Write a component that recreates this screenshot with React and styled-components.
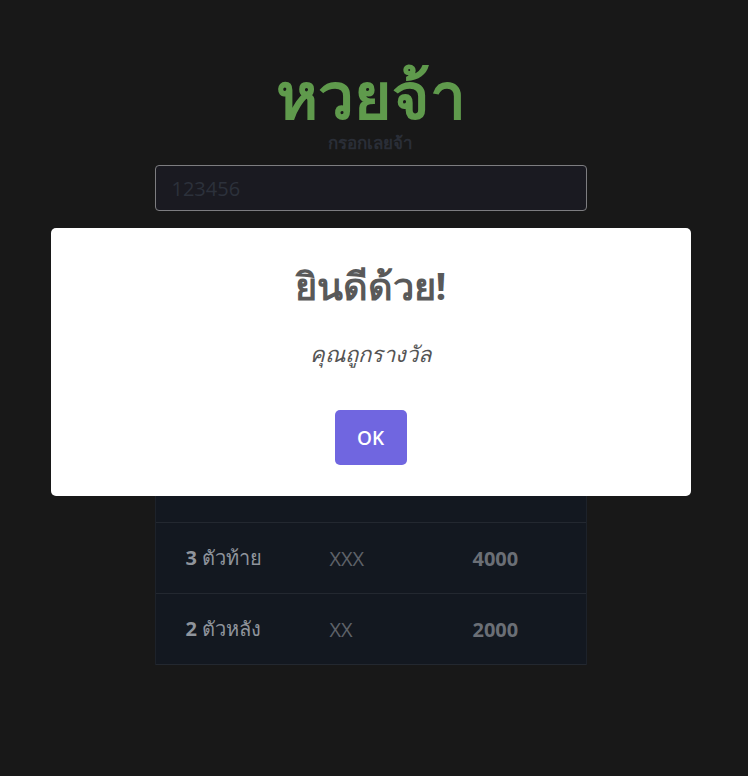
import React from 'react';
import styled, { createGlobalStyle } from 'styled-components';

const GlobalStyle = createGlobalStyle`
	html, body {
		margin: 0;
		padding: 0;
		background: #181818;
		font-family: 'Open Sans', 'Noto Sans', sans-serif;
	}
`;

const prizes = [
	{ label: 'รางวัลที่', num: '1', number: 'XXXXXX', money: '6000000' },
	{ label: 'ข้างเคียง', num: '', number: 'XXXXXX', money: '100000' },
	{ label: 'ตัวหน้า', num: '3', number: 'XXX', money: '4000' },
	{ label: 'ตัวท้าย', num: '3', number: 'XXX', money: '4000' },
	{ label: 'ตัวหลัง', num: '2', number: 'XX', money: '2000' },
];

const App = () => {
	return (
		<>
			<GlobalStyle />
			<Page>
				<Title>หวยจ้า</Title>
				<Subtitle>กรอกเลยจ้า</Subtitle>
				<NumberInput type='text' placeholder='123456' autoComplete='off' />
				<Table>
					<HeadRow>
						<Cell>รางวัล</Cell>
						<Cell>เลข</Cell>
						<Cell>เงิน</Cell>
					</HeadRow>
					{prizes.map((p, id) => (
						<Row key={id}>
							<Cell>
								{p.num && <b>{p.num} </b>}
								{p.label}
							</Cell>
							<Cell muted>{p.number}</Cell>
							<Cell money>{p.money}</Cell>
						</Row>
					))}
				</Table>
			</Page>
			<Overlay>
				<Popup>
					<PopupTitle>ยินดีด้วย!</PopupTitle>
					<PopupText>คุณถูกรางวัล</PopupText>
					<OkButton>OK</OkButton>
				</Popup>
			</Overlay>
		</>
	);
};

export default App;

// the reference is centred in 741px, the last 7px being a (hidden) scrollbar gutter
const Page = styled.div`
	display: flex;
	flex-direction: column;
	align-items: center;
	padding-top: 61px;
	padding-right: 7px;
	padding-bottom: 80px;
`;

const Title = styled.h1`
	margin: 0;
	font-size: 64px;
	line-height: 68px;
	font-weight: 700;
	color: #5f9a4c;
`;

const Subtitle = styled.div`
	margin-top: 3px;
	font-size: 17px;
	line-height: 22px;
	font-weight: 700;
	color: #2a2e37;
`;

const NumberInput = styled.input`
	box-sizing: border-box;
	margin-top: 11px;
	width: 432px;
	height: 46px;
	padding: 0 16px;
	border: 1px solid #7d7d80;
	border-radius: 4px;
	background: #1a1a21;
	font-family: 'Open Sans', sans-serif;
	font-size: 20px;
	color: #ccc;
	outline: none;
	&::placeholder {
		color: #2c313b;
	}
`;

const Table = styled.div`
	margin-top: 28px;
	width: 432px;
	background: #131820;
	border-left: 1px solid #1d222a;
	border-right: 1px solid #1d222a;
	box-sizing: border-box;
`;

const Row = styled.div`
	display: grid;
	grid-template-columns: 144px 143px 1fr;
	height: 71px;
	align-items: center;
	border-bottom: 1px solid #232830;
	box-sizing: border-box;
`;

const HeadRow = styled(Row)`
	font-weight: 700;
`;

const Cell = styled.div`
	padding-left: 30px;
	font-size: 20px;
	color: ${({ muted, money }) => (muted ? '#5e6269' : money ? '#6b6f76' : '#8f949c')};
	font-weight: ${({ money }) => (money ? 700 : 400)};
	& b {
		font-weight: 700;
	}
`;

const Overlay = styled.div`
	position: fixed;
	inset: 0;
	display: flex;
	justify-content: center;
	align-items: flex-start;
	padding-top: 228px;
	padding-right: 7px;
	box-sizing: border-box;
`;

const Popup = styled.div`
	width: 640px;
	height: 268px;
	box-sizing: border-box;
	background: #fff;
	border-radius: 5px;
	display: flex;
	flex-direction: column;
	align-items: center;
	padding-top: 34px;
`;

const PopupTitle = styled.h2`
	margin: 0;
	font-size: 38px;
	line-height: 46px;
	font-weight: 700;
	color: #595959;
`;

const PopupText = styled.div`
	margin-top: 29px;
	font-size: 22px;
	line-height: 32px;
	font-style: italic;
	color: #545454;
`;

const OkButton = styled.button`
	margin-top: 41px;
	width: 72px;
	height: 55px;
	border: none;
	border-radius: 5px;
	background: #7066e0;
	color: #fff;
	font-family: 'Open Sans', sans-serif;
	font-size: 19px;
	font-weight: 600;
	cursor: pointer;
`;
